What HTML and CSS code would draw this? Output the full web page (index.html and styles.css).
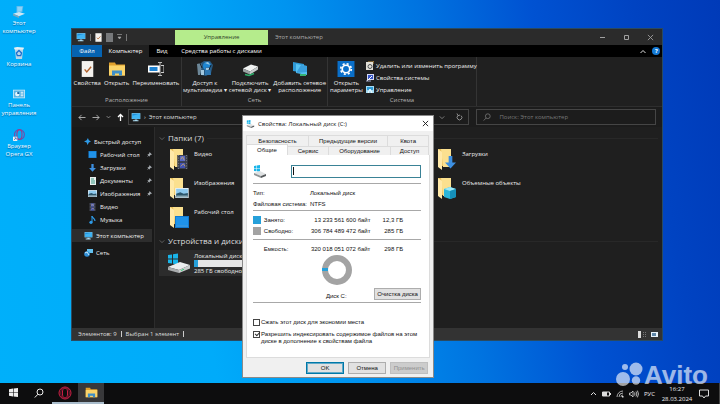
FILE: index.html
```html
<!DOCTYPE html>
<html lang="ru">
<head>
<meta charset="utf-8">
<title>Этот компьютер</title>
<link rel="stylesheet" href="styles.css">
</head>
<body>
<svg class="defs" width="0" height="0" aria-hidden="true">
  <symbol id="pc" viewBox="0 0 16 14">
    <rect x="1" y="0" width="14" height="9.500" fill="#7fd0f7"/><rect x="2" y="1" width="12" height="7.500" fill="#1e8fdc"/>
    <path d="M2 8.500V4l12-3v7.500z" fill="#3fb4f2"/><path d="M6 10h4v1.500h2V13H3v-1.500h3z" fill="#a9d8ee"/>
  </symbol>
  <symbol id="sheet" viewBox="0 0 18 22">
    <path d="M1 0h16v22H1z" fill="#f4f2ee"/><path d="M5 11.500l3 3.500 6-7" fill="none" stroke="#b0602c" stroke-width="2"/>
  </symbol>
  <symbol id="folder-open" viewBox="0 0 18 15">
    <path d="M1 1h6l1 2h9v11H1z" fill="#e0a02c"/><path d="M1 4h16v10H1z" fill="#fbd469"/>
    <path d="M4 14V9h10v5h-3v-2H7v2z" fill="#3f8fc8"/>
  </symbol>
  <symbol id="folder" viewBox="0 0 20 23">
    <path d="M1 1h13v17H5z" fill="#e9be57"/><path d="M4 1h10v18H6z" fill="#fbe08f"/><path d="M1 1l4 3v18l-4-3z" fill="#ffe9a9"/>
  </symbol>
  <symbol id="down" viewBox="0 0 12 14"><path d="M4 0h4v7h4l-6 6.500L0 7h4z" fill="#3d8fe0"/></symbol>
  <symbol id="film" viewBox="0 0 12 16">
    <path d="M0 0h12v16H0z" fill="#3a3d48"/><path d="M3 1h6v6H3z" fill="#5668c8"/><path d="M3 9h6v6H3z" fill="#4254b6"/>
    <path d="M1.500 0v16M10.500 0v16" stroke="#8d919c" stroke-dasharray="1 2"/><path d="M4 5l2-3 2 4M4 13l3-3 2 3" stroke="#c6a26a" fill="none"/>
  </symbol>
  <symbol id="picture" viewBox="0 0 16 12">
    <path d="M0 0h16v12H0z" fill="#eef4f8"/><path d="M1 1h14v10H1z" fill="#8cc8ee"/><path d="M1 7l5-2 4 2 5-1v5H1z" fill="#2c566c"/><path d="M1 9h14v2H1z" fill="#8aa8b4"/>
  </symbol>
  <symbol id="desk" viewBox="0 0 14 12"><path d="M0 0h14v12H0z" fill="#1279cf"/><path d="M1 1h12v8H1z" fill="#1f93ea"/><path d="M1 10h12" stroke="#52b4f5"/></symbol>
  <symbol id="pin" viewBox="0 0 8 8"><path d="M4 0l4 4-1 .5-1-.2-1.500 1.500V7.500L3 6 0 8l2-3L.5 3.500h1.700L3.700 2z" fill="#a5abb0"/></symbol>
  <symbol id="drive" viewBox="0 0 24 20">
    <path d="M1 2l4-.6v4H1zM6 1.200l5-.8v5H6zM1 6.500h4v4L1 10zM6 6.500h5v5l-5-.8z" fill="#19b5ea"/>
    <path d="M1 14l12-5 10 3-11 5z" fill="#eceeef"/><path d="M1 14l11 3v3L1 17z" fill="#a8abad"/><path d="M12 17l11-5v3.500L12 20z" fill="#c9cccd"/><path d="M14 17.500l3-1.200" stroke="#3ad07a"/>
  </symbol>
  <symbol id="drive-small" viewBox="0 0 14 13">
    <path d="M1 1l2.300-.4v2.600H1zM3.800.5L7 0v3.200H3.800zM1 3.700h2.300v2.500L1 6zM3.800 3.700H7v3l-3.200-.4z" fill="#19b5ea"/>
    <path d="M1 8l6-2 6 3-5 2z" fill="#dfe2e3"/><path d="M1 8l7 3v2L1 10z" fill="#8f9496"/><path d="M8 11l5-2v2l-5 2z" fill="#55595b"/>
  </symbol>
  <symbol id="opera" viewBox="0 0 14 14">
    <circle cx="7" cy="7" r="6" fill="none" stroke="#d01f46" stroke-width="1"/><ellipse cx="7" cy="7" rx="2.600" ry="5" fill="none" stroke="#d01f46"/><ellipse cx="7" cy="7" rx="4.300" ry="5.700" fill="none" stroke="#8e1c3a" stroke-width=".8"/>
  </symbol>
  <symbol id="glass" viewBox="0 0 10 10"><circle cx="6" cy="4" r="3" fill="none" stroke="currentColor"/><path d="M4 6.200L.8 9.500" stroke="currentColor"/></symbol>
  <symbol id="cross" viewBox="0 0 8 8"><path d="M1 1l6 6M7 1L1 7" stroke="currentColor" fill="none"/></symbol>
  <symbol id="chev" viewBox="0 0 8 6"><path d="M1 1.500l3 3 3-3" stroke="currentColor" fill="none"/></symbol>
  <symbol id="back" viewBox="0 0 9 8"><path d="M8.500 4H1M4 1L1 4l3 3" stroke="currentColor" fill="none"/></symbol>
</svg>

<main class="desktop">
  <nav class="shortcuts" aria-label="Рабочий стол">
    <a href="#"><svg class="s-ico" viewBox="0 0 16 14"><path d="M5 0h8l-1 7-7 1z" fill="#5db7ec"/><path d="M6 1h6l-1 5-5 1z" fill="#8bd3f8"/><path d="M1 9l7-2 7 2-7 3z" fill="#cfe6f2"/><path d="M1 9l7 3v2l-7-3z" fill="#7da4bb"/></svg>Этот компьютер</a>
    <a href="#" class="one"><svg class="s-ico" viewBox="0 0 14 14"><path d="M2 1h10l-1.500 13h-7z" fill="#b9d6e8"/><path d="M1 1l4-1 8 1-1 2H2z" fill="#e4f0f6"/><path d="M7 4l3 3-1 3H5L4 7z" fill="none" stroke="#1c6fd0" stroke-width="1.500"/></svg>Корзина</a>
    <a href="#"><svg class="s-ico" viewBox="0 0 16 14"><path d="M1 2h14v10H1z" fill="#bfe6f8"/><path d="M2 3h12v8H2z" fill="#58b4e4"/><circle cx="6" cy="7" r="2.600" fill="#e8f6fc"/><path d="M6 7V4.400A2.600 2.600 0 0 1 8.600 7z" fill="#155f9c"/><path d="M10 5h3M10 7h3M10 9h3" stroke="#fff"/></svg>Панель управления</a>
    <a href="#"><svg class="s-ico" viewBox="0 0 14 14"><circle cx="7.500" cy="6.500" r="5.800" fill="none" stroke="#6b4fb0" stroke-width="1.300"/><ellipse cx="7.500" cy="6.500" rx="3" ry="5.500" fill="none" stroke="#a23a86" stroke-width="1.200"/><path d="M0 9h5v5H0z" fill="#f2f2f2"/><path d="M1 13l2.500-2.500M1.800 10.300h2v2" stroke="#2b62b8" fill="none" stroke-width=".8"/></svg>Браузер Opera GX</a>
  </nav>

  <section class="explorer" aria-label="Этот компьютер">
    <header class="titlebar">
      <div class="quick">
        <svg width="10" height="9"><use href="#pc"/></svg><i></i>
        <svg width="7" height="9"><use href="#sheet"/></svg>
        <svg width="7" height="9" viewBox="0 0 7 9"><path d="M0 0h7v9H0z" fill="#77797b"/></svg>
        <svg width="5" height="6" viewBox="0 0 5 6"><path d="M0 .5h5M1 3h3L2.500 5z" fill="#aaa" stroke="#aaa" stroke-width=".6"/></svg><i></i>
      </div>
      <div class="context">Управление</div>
      <h1>Этот компьютер</h1>
      <div class="winbtns">
        <button aria-label="Свернуть"><svg width="7" height="7" viewBox="0 0 7 7"><path d="M1 3.500h5" stroke="currentColor"/></svg></button>
        <button aria-label="Развернуть"><svg width="7" height="7" viewBox="0 0 7 7"><path d="M1.500 1.500h4v4h-4z" fill="none" stroke="currentColor"/></svg></button>
        <button aria-label="Закрыть"><svg width="7" height="7"><use href="#cross"/></svg></button>
      </div>
    </header>
    <div class="tabs">
      <button class="file">Файл</button><button class="active">Компьютер</button><button class="view">Вид</button><button class="tools">Средства работы с дисками</button>
      <span class="help"><svg width="6" height="5" viewBox="0 0 6 5"><path d="M.5 4L3 1.500 5.500 4" fill="none" stroke="#ddd"/></svg><b>?</b></span>
    </div>
    <div class="ribbon">
      <div class="group g1">
        <div class="cmds">
          <button><svg width="13" height="16"><use href="#sheet"/></svg>Свойства</button>
          <button><svg width="18" height="15"><use href="#folder-open"/></svg>Открыть</button>
          <button><svg width="16" height="15" viewBox="0 0 16 15"><path d="M0 4h12v7H0z" fill="#fff"/><path d="M1.500 5.500h8v4h-8z" fill="#1e83d2"/><path d="M13 4h3v7h-3" stroke="#ccc" fill="none"/><path d="M10 1h4M10 14h4M12 1v13" stroke="#bbb"/></svg>Переименовать</button>
        </div>
        <p>Расположение</p>
      </div>
      <div class="group g2">
        <div class="cmds">
          <button><svg width="18" height="16" viewBox="0 0 18 16"><path d="M2 4l6-4h6l3 4-2 8-5 3-5-1z" fill="#27577e"/><path d="M1 3l4-1 1 3-2 9H2z" fill="#6d8798"/><circle cx="11" cy="5" r="4" fill="#1d86d2"/><path d="M9 6h5l1 8H9z" fill="#2f78b2"/><path d="M9 2l3-1 2 3M10 7h3v2h-3zM5 9h3v5H5z" fill="#a4c8de"/><path d="M4 2l2 5M15 4l-2 5" stroke="#111f2a"/></svg>Доступ к<br>мультимедиа ▾</button>
          <button><svg width="18" height="15" viewBox="0 0 18 15"><path d="M2 7l8-4 7 2-8 5z" fill="#f0f2f2"/><path d="M2 7l7 3v3l-7-3z" fill="#9ba1a3"/><path d="M9 10l8-5v3l-8 5z" fill="#c7cbcc"/><path d="M4 13l4 1 5-2" stroke="#2cae6a" stroke-width="1.500" fill="none"/></svg>Подключить<br>сетевой диск ▾</button>
          <button><svg width="18" height="16" viewBox="0 0 18 16"><path d="M2 1l11 2v9L2 10z" fill="#2f9ad8"/><path d="M5 3l11 2v9L5 12z" fill="#57c3f2"/><path d="M5 12l5-8 6 1v6z" fill="#399fdd"/><path d="M9 14h6" stroke="#35b272" stroke-width="2"/></svg>Добавить сетевое<br>расположение</button>
        </div>
        <p>Сеть</p>
      </div>
      <div class="group g3">
        <div class="cmds">
          <button><svg width="18" height="17" viewBox="0 0 18 17"><path d="M0 0h18v17H0z" fill="#0a6fc9"/><circle cx="9" cy="8.500" r="5.600" fill="none" stroke="#fff" stroke-width="1.800" stroke-dasharray="2.200 2.200"/><circle cx="9" cy="8.500" r="4" fill="none" stroke="#fff" stroke-width="1.800"/></svg>Открыть<br>параметры</button>
          <div class="stack">
            <button><svg width="8" height="9" viewBox="0 0 8 9"><path d="M0 1h7v8H0z" fill="#e2dfd6"/><circle cx="4" cy="5.500" r="2" fill="none" stroke="#4d5154"/><path d="M2 0h6v3" stroke="#c89b4a" fill="none"/></svg>Удалить или изменить программу</button>
            <button><svg width="8" height="9" viewBox="0 0 8 9"><path d="M1 1h7v6H1z" fill="#d6dbf4"/><path d="M2 2h5v4H2z" fill="#3453c6"/><path d="M1 8l5-5" stroke="#fff"/><path d="M0 8h5" stroke="#9aa3c6"/></svg>Свойства системы</button>
            <button><svg width="8" height="9" viewBox="0 0 8 9"><path d="M0 1h8v7H0z" fill="#a4dcf5"/><path d="M1 2h6v3H1z" fill="#2e9bd5"/><path d="M2 8l2-4 2 4" stroke="#fff" fill="none"/></svg>Управление</button>
          </div>
        </div>
        <p>Система</p>
      </div>
    </div>
    <div class="address">
      <div class="arrows">
        <svg width="8" height="7"><use href="#back"/></svg>
        <svg class="flip" width="8" height="7"><use href="#back"/></svg>
        <svg width="5" height="4"><use href="#chev"/></svg>
        <svg class="up" width="7" height="8" viewBox="0 0 7 8"><path d="M3.500 8V1.500M1 4l2.500-2.500L6 4" stroke="currentColor" stroke-width="1.300" fill="none"/></svg>
      </div>
      <div class="crumb"><svg width="10" height="9"><use href="#pc"/></svg><span>›</span>Этот компьютер
        <svg class="drop" width="6" height="5"><use href="#chev"/></svg>
        <svg class="dim" width="7" height="8" viewBox="0 0 7 8"><path d="M5 2.600A2.400 2.400 0 1 1 2 2.600M1 .5l1 2.200 2-.7" fill="none" stroke="currentColor" stroke-width=".9"/></svg>
      </div>
      <label class="search"><svg width="8" height="8"><use href="#glass"/></svg><input type="search" aria-label="Поиск" placeholder="Поиск: Этот компьютер"></label>
    </div>
    <div class="panes">
      <nav class="tree" aria-label="Папки">
        <a href="#" class="root"><svg width="7" height="7" viewBox="0 0 8 8"><path d="M4.500 0l1 2.500L8 4 5.500 5 4 8 3 5 0 4l3-1.500z" fill="#2f9be8"/></svg>Быстрый доступ</a>
        <a href="#"><svg width="9" height="7"><use href="#desk"/></svg>Рабочий стол<svg class="pin" width="5" height="5"><use href="#pin"/></svg></a>
        <a href="#"><svg width="9" height="8"><use href="#down"/></svg>Загрузки<svg class="pin" width="5" height="5"><use href="#pin"/></svg></a>
        <a href="#"><svg width="9" height="8" viewBox="0 0 9 8"><path d="M2 0h6v8H2z" fill="#e8eeee"/><path d="M3 2h3M3 4h4M3 6h4" stroke="#3a9a86"/></svg>Документы<svg class="pin" width="5" height="5"><use href="#pin"/></svg></a>
        <a href="#"><svg width="9" height="7"><use href="#picture"/></svg>Изображения<svg class="pin" width="5" height="5"><use href="#pin"/></svg></a>
        <a href="#"><svg width="9" height="8"><use href="#film"/></svg>Видео</a>
        <a href="#"><svg width="9" height="8" viewBox="0 0 9 8"><path d="M4 0c0 2 3 2 3 5" stroke="#2f9be8" fill="none" stroke-width="1.200"/><path d="M4 0v6" stroke="#2f9be8"/><circle cx="3" cy="6.300" r="1.600" fill="#2f9be8"/></svg>Музыка</a>
        <a href="#" class="root current"><svg width="9" height="8"><use href="#pc"/></svg>Этот компьютер</a>
        <a href="#" class="root"><svg width="9" height="8" viewBox="0 0 9 8"><path d="M3 0h6v4H3z" fill="#63c0ee"/><circle cx="3" cy="5" r="2.800" fill="#2f8fd6"/><path d="M1 4l2-1 2 3" stroke="#cdeafa" fill="none"/></svg>Сеть</a>
      </nav>
      <div class="content">
        <h2><svg width="6" height="5"><use href="#chev"/></svg>Папки (7)</h2>
        <div class="folders">
          <a href="#"><svg width="20" height="23"><use href="#folder"/><use href="#film" x="8" y="7" width="11" height="14"/></svg>Видео</a>
          <a href="#" class="far"><svg width="20" height="23"><use href="#folder"/><use href="#down" x="8" y="8" width="11" height="13"/></svg>Загрузки</a>
          <a href="#"><svg width="20" height="23"><use href="#folder"/><use href="#picture" x="6" y="11" width="14" height="10"/></svg>Изображения</a>
          <a href="#" class="far"><svg width="20" height="23" viewBox="0 0 20 23"><use href="#folder"/><path d="M7 12l6-2 6 2v8l-6 2-6-2z" fill="#2cb6da"/><path d="M7 12l6-2 6 2-6 2z" fill="#9deaf8"/><path d="M13 14l6-2v8l-6 2z" fill="#1590ba"/></svg>Объемные объекты</a>
          <a href="#"><svg width="20" height="23"><use href="#folder"/><use href="#desk" x="6" y="10" width="14" height="12"/></svg>Рабочий стол</a>
        </div>
        <h2 class="devices"><svg width="6" height="5"><use href="#chev"/></svg>Устройства и диски (2)</h2>
        <a href="#" class="disk"><svg width="24" height="20"><use href="#drive"/></svg><span>Локальный диск (C:)<i class="bar"><i></i></i>285 ГБ свободно</span></a>
      </div>
    </div>
    <footer class="status"><span>Элементов: 9</span><i></i><span>Выбран 1 элемент</span><i></i>
      <svg class="views" width="20" height="7" viewBox="0 0 20 7"><path d="M0 0h3v7H0z" fill="#ddd"/><path d="M5 1.500h4M5 3.500h4M5 5.500h4" stroke="#777" stroke-dasharray="1 1"/><path d="M13 1h7v5h-7z" fill="#eaf3fa"/><path d="M14 2h4v3h-4z" fill="#5f87a8"/></svg>
    </footer>
  </section>

  <section class="dialog" role="dialog" aria-label="Свойства: Локальный диск (C:)">
    <header><svg width="9" height="8"><use href="#drive-small"/></svg><h2>Свойства: Локальный диск (C:)</h2><button aria-label="Закрыть"><svg width="7" height="7"><use href="#cross"/></svg></button></header>
    <div class="dtabs top" role="tablist"><button>Безопасность</button><button>Предыдущие версии</button><button>Квота</button></div>
    <div class="dtabs low" role="tablist"><button class="sel">Общие</button><button>Сервис</button><button>Оборудование</button><button>Доступ</button></div>
    <div class="panel">
      <div class="name"><svg width="14" height="13"><use href="#drive-small"/></svg><span class="caret"><input type="text" aria-label="Метка тома"></span></div>
      <div class="block">
        <table class="info"><tr><th>Тип:</th><td>Локальный диск</td></tr><tr><th>Файловая система:</th><td>NTFS</td></tr></table>
      </div>
      <div class="block sizes">
        <table class="space"><tr><td class="sw"><i class="used"></i></td><th>Занято:</th><td class="num">13 233 561 600 байт</td><td class="num gb">12,3 ГБ</td></tr><tr><td class="sw"><i class="free"></i></td><th>Свободно:</th><td class="num">306 784 489 472 байт</td><td class="num gb">285 ГБ</td></tr></table>
      </div>
      <div class="block">
        <table class="space"><tr><td class="sw"></td><th>Емкость:</th><td class="num">320 018 051 072 байт</td><td class="num gb">298 ГБ</td></tr></table>
      </div>
      <div class="chart"><svg width="30" height="30" viewBox="0 0 30 30"><circle cx="15" cy="15" r="12" fill="none" stroke="#a3a3a3" stroke-width="6"/><path d="M0 13h6v3H0z" fill="#26a0da"/></svg></div>
      <div class="clean"><span>Диск C:</span><button>Очистка диска</button></div>
      <div class="checks">
        <label><input type="checkbox"><span>Сжать этот диск для экономии места</span></label>
        <label><input type="checkbox" checked><span>Разрешить индексировать содержимое файлов на этом<br>диске в дополнение к свойствам файла</span></label>
      </div>
    </div>
    <div class="actions"><button class="ok">OK</button><button>Отмена</button><button disabled>Применить</button></div>
  </section>

  <footer class="taskbar">
    <button aria-label="Пуск"><svg width="9" height="9" viewBox="0 0 9 9"><path d="M0 1.200l4-.6v3.600H0zM4.600.5L9 0v4.200H4.600zM0 4.800h4v3.600l-4-.6zM4.600 4.800H9V9l-4.400-.5z" fill="#eee"/></svg></button>
    <button aria-label="Поиск"><svg width="10" height="10"><use href="#glass"/></svg></button>
    <button class="run" aria-label="Opera"><svg width="14" height="14"><use href="#opera"/></svg></button>
    <button class="run on" aria-label="Проводник"><svg width="13" height="11"><use href="#folder-open"/></svg></button>
    <div class="tray">
      <svg width="7" height="5" viewBox="0 0 7 5"><path d="M1 4l2.500-2.500L6 4" fill="none" stroke="#ddd"/></svg>
      <svg width="9" height="6" viewBox="0 0 9 6"><path d="M.5 1h7v4h-7z" fill="none" stroke="#ddd"/><path d="M1 1h4v4H1zM8 2h1v2H8z" fill="#ddd"/></svg>
      <svg width="8" height="8" viewBox="0 0 8 8"><path d="M1 7A6 6 0 0 1 7 1M3 7a4 4 0 0 1 4-4M5 7a2 2 0 0 1 2-2" fill="none" stroke="#bbb" stroke-width=".9"/><path d="M6 6h1.500v1.500H6z" fill="#ddd"/></svg>
      <svg width="10" height="8" viewBox="0 0 10 8"><path d="M.5 3h1.500l2-2v6l-2-2H.5z" fill="none" stroke="#ddd" stroke-width=".8"/><path d="M5.500 2.500q1 1.500 0 3M7 1.500q1.700 2.500 0 5M8.400.6q2.200 3.400 0 6.800" fill="none" stroke="#ddd" stroke-width=".8"/></svg>
      <span>РУС</span>
      <time>16:27<br>28.03.2024</time>
      <svg width="10" height="10" viewBox="0 0 10 10"><path d="M.5 1h9v6H6.500L5 9 3.500 7h-3z" fill="none" stroke="#ddd"/></svg>
    </div>
  </footer>
  <div class="mark"><svg width="28" height="26" viewBox="0 0 28 26"><circle cx="9" cy="5" r="3"/><circle cx="20" cy="7" r="6.500"/><circle cx="7" cy="17" r="7"/><circle cx="20" cy="18.500" r="4.200"/></svg>Avito</div>
</main>
</body>
</html>
```
FILE: styles.css
```css
* { box-sizing: border-box; }
html, body { height: 100%; }
body {
  margin: 0;
  overflow: hidden;
  font: 6px/8px "Open Sans", "Noto Sans", sans-serif;
  color: #eee;
}
svg { display: block; flex: none; }
.defs { position: absolute; }
h1, h2, p { margin: 0; font-weight: 400; }
a { color: inherit; text-decoration: none; }
button {
  margin: 0; padding: 0; border: 0; background: none;
  font: inherit; color: inherit; white-space: nowrap;
}
.desktop {
  position: relative;
  height: 100%;
  display: flex;
  flex-direction: column;
  justify-content: space-between;
  background: linear-gradient(80deg, #00b0fa 0%, #00abfa 28%, #0094f0 45%, #0073e0 62%, #0052d2 76%, #0043c2 89%, #003ab8 100%);
}

/* desktop shortcuts */
.shortcuts {
  width: 38px; padding-top: 6px;
  display: flex; flex-direction: column; gap: 12px;
  text-align: center; color: #f4fbff;
}
.shortcuts a { display: flex; flex-direction: column; align-items: center; gap: 1px; text-shadow: 0 1px 1px #0060a0; }
.shortcuts .one { margin-bottom: 8px; }
.s-ico { width: 14px; height: 12px; }

/* explorer window */
.explorer {
  position: absolute; left: 10%; right: 8%; top: 29px; bottom: 64px;
  display: flex; flex-direction: column;
  background: #1c1c1c;
  box-shadow: 0 0 0 1px #2a4a60;
}
.titlebar { display: flex; align-items: center; height: 16px; background: #2b2b2b; }
.quick { display: flex; align-items: center; gap: 4px; width: 103px; padding-left: 4px; }
.quick i { width: 1px; height: 7px; background: #777; }
.context { width: 93px; height: 15px; line-height: 15px; align-self: flex-end; text-align: center; background: #b5ec8c; color: #34452a; }
.titlebar h1 { margin-left: 7px; font-size: 6px; color: #aaa; }
.winbtns { display: flex; margin-left: auto; color: #a0a0a0; }
.winbtns button { width: 24px; display: flex; justify-content: center; }
.tabs { display: flex; height: 12px; background: #000; color: #fff; }
.tabs .file { width: 30px; background: #0563b1; }
.tabs .active { width: 47px; background: #202020; }
.tabs .view { width: 26px; }
.tabs .tools { width: 93px; }
.help { display: flex; align-items: center; gap: 6px; margin: 0 2px 0 auto; }
.help b { width: 8px; height: 8px; border-radius: 50%; background: #1479d4; text-align: center; }
.ribbon { display: flex; height: 50px; background: #202020; border-bottom: 1px solid #2e2e2e; }
.group { display: flex; flex-direction: column; justify-content: space-between; padding: 4px 0 2px; border-right: 1px solid #343434; }
.group p { text-align: center; color: #b4b4b4; }
.cmds { display: flex; justify-content: space-around; }
.cmds > button { display: flex; flex-direction: column; align-items: center; gap: 3px; line-height: 7px; }
.cmds > button svg { height: 16px; }
.g1 { width: 110px; }
.g2 { width: 146px; }
.g3 { width: 149px; }
.g3 .cmds { justify-content: flex-start; gap: 3px; padding-left: 2px; }
.stack { display: flex; flex-direction: column; gap: 3px; }
.stack button { display: flex; align-items: center; gap: 2px; height: 9px; }
.address { display: flex; align-items: center; height: 20px; padding-right: 6px; color: #bbb; }
.arrows { display: flex; align-items: center; gap: 6px; width: 56px; padding-left: 6px; }
.flip { transform: scaleX(-1); }
.up { color: #fff; }
.crumb { flex: 1; display: flex; align-items: center; gap: 3px; height: 16px; padding: 0 5px 0 2px; border: 1px solid #454545; color: #ddd; }
.crumb .drop { margin: 0 8px 0 auto; color: #999; }
.dim { color: #999; }
.search { display: flex; align-items: center; gap: 8px; width: 180px; height: 16px; margin-left: 7px; padding-left: 6px; border: 1px solid #454545; color: #777; }
.search input { flex: 1; min-width: 0; padding: 0; border: 0; outline: 0; background: none; font: inherit; color: #ddd; }
.search input::placeholder { color: #777; opacity: 1; }
.panes { flex: 1; display: flex; min-height: 0; }
.tree { width: 83px; padding-top: 8px; border-right: 1px solid #2c2c2c; background: #191919; }
.tree a { display: flex; align-items: center; gap: 3px; height: 13px; padding: 0 2px 0 16px; }
.tree .root { padding-left: 12px; }
.tree .current { margin: 3px 2px 4px 0; background: #2d2d2d; }
.pin { margin-left: auto; }
.content { flex: 1; min-width: 0; padding: 5px 4px 0; background: #1f1f1f; }
.content h2 { display: flex; align-items: center; gap: 3px; height: 12px; font-size: 8px; color: #ddd; }
.content h2::after { content: ""; flex: 1; height: 1px; background: #282828; }
.content h2 svg { color: #777; }
.folders { display: grid; grid-template-columns: repeat(3, 134px); grid-auto-rows: 23px; row-gap: 6px; padding: 4px 0 0 10px; }
.folders a { display: flex; gap: 5px; padding-top: 2px; line-height: 8px; }
.folders a svg { margin-top: -2px; }
.folders .far { grid-column: 3; }
.devices { margin-top: 6px; }
.disk { display: flex; align-items: center; gap: 3px; width: 134px; height: 26px; margin-top: 3px; padding-left: 8px; background: #2c2c2c; }
.disk span { flex: 1; }
.bar { display: block; height: 7px; margin-right: 8px; background: #e6e6e6; }
.bar i { display: block; width: 4px; height: 100%; background: #26a0da; }
.status { display: flex; align-items: center; gap: 4px; height: 12px; padding: 0 4px 0 6px; background: #333; color: #ddd; }
.status i { width: 1px; height: 6px; background: #ccc; }
.views { margin-left: auto; }

/* properties dialog */
.dialog {
  position: absolute; left: 33.6%; top: 115px; width: 26.7%;
  background: #f0f0f0; color: #111;
  border: 1px solid #8a8a8a;
  font-family: "Liberation Sans", Arial, sans-serif;
}
.dialog header { display: flex; align-items: center; gap: 3px; height: 15px; padding: 0 4px 0 3px; background: #fff; }
.dialog header h2 { font: 6px/8px "Open Sans", sans-serif; }
.dialog header button { margin-left: auto; }
.dtabs { display: grid; margin: 0 5px 0 3px; }
.dtabs button { height: 11px; border: 1px solid #dcdcdc; border-bottom: 0; margin-right: -1px; }
.top { grid-template-columns: 62fr 79fr 41fr; margin-top: 4px; }
.low { grid-template-columns: 41fr 41fr 62fr 38fr; }
.low button { height: 9px; line-height: 8px; }
.low .sel { height: 11px; margin-top: -2px; background: #fff; line-height: 9px; }
.panel { margin: 0 3px; padding: 9px 8px 12px 6px; background: #fff; border: 1px solid #dcdcdc; border-top: 0; }
.name { display: flex; align-items: center; justify-content: space-between; height: 14px; margin-bottom: 5px; }
.caret { position: relative; width: 130px; }
.caret::before { content: ""; position: absolute; left: 2px; top: 2px; width: 1px; height: 8px; background: #111; }
.name input { display: block; width: 100%; height: 13px; padding: 0 3px; border: 1px solid #3a8296; font: inherit; }
.block { border-top: 1px solid #a8a8a8; padding-top: 3px; }
.sizes { margin-top: 1px; padding-bottom: 3px; }
.dialog table { width: 100%; border-collapse: collapse; }
.dialog th, .dialog td { padding: 0; height: 11px; font-weight: 400; text-align: left; white-space: nowrap; }
.info th { width: 57px; }
.sw { width: 11px; }
.sw i { display: block; width: 8px; height: 8px; }
.used { background: #26a0da; }
.free { background: #a3a3a3; }
.space th { width: 38px; }
.dialog .num { width: 69px; text-align: right; }
.dialog .gb { width: 51px; padding-right: 18px; }
.chart { display: flex; justify-content: center; padding-top: 1px; }
.clean { display: flex; align-items: center; height: 18px; border-bottom: 1px solid #a8a8a8; }
.clean span { margin: 5px 0 0 73px; }
.clean button { width: 47px; height: 12px; margin-left: auto; background: #e1e1e1; border: 1px solid #adadad; }
.checks { display: flex; flex-direction: column; gap: 5px; padding-top: 16px; }
.checks label { display: flex; align-items: flex-start; gap: 1px; line-height: 7px; white-space: nowrap; }
.checks input { appearance: none; flex: none; position: relative; width: 7px; height: 7px; margin: 0; border: 1px solid #444; background: #fff; }
.checks input:checked::after { content: ""; position: absolute; left: 1px; top: 0; width: 4px; height: 2px; border: solid #333; border-width: 0 0 1px 1px; transform: rotate(-45deg); }
.actions { display: flex; justify-content: flex-end; gap: 4px; padding: 4px 5px 3px; }
.actions button { width: 38px; height: 12px; background: #e1e1e1; border: 1px solid #adadad; }
.actions .ok { border: 1px solid #0078a8; box-shadow: inset 0 0 0 1px #60a9c8; }
.actions button:disabled { background: #ccc; border-color: #bfbfbf; color: #909090; }

/* taskbar */
.taskbar { display: flex; height: 21px; background: #0d0d0e; border-right: 1px solid #444; }
.taskbar button { width: 26px; display: flex; align-items: center; justify-content: center; border-bottom: 2px solid transparent; }
.taskbar .run { border-bottom-color: #a9bccb; }
.taskbar .on { background: #38383a; }
.tray { display: flex; align-items: center; gap: 5px; margin-left: auto; padding-right: 10px; color: #eee; }
.tray time { width: 34px; text-align: center; line-height: 10px; }
.mark {
  position: absolute; right: 12px; bottom: 16px;
  display: flex; align-items: center;
  font: 700 26px/26px "Liberation Sans", sans-serif;
  color: #fff; fill: #fff; opacity: .62;
}
```
